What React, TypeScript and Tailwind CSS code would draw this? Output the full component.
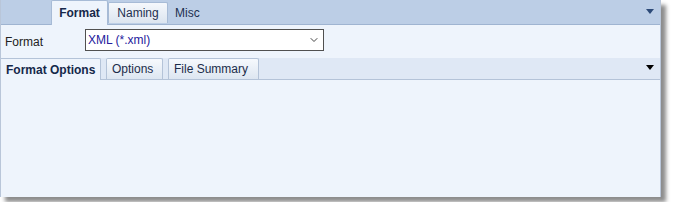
import { ChevronDown } from 'lucide-react';

const font = { fontFamily: '"Liberation Sans", Arial, sans-serif' };

const TopTab = ({ label, active, w }: { label: string; active?: boolean; w: string }) =>
  active ? (
    <div className={`h-[25px] -mb-px ${w} flex items-center justify-center bg-[#eef4fc] border-x border-t border-[#a7bbd6] rounded-t-[2px] text-[12px] font-bold text-[#17284a] whitespace-nowrap`}>
      {label}
    </div>
  ) : (
    <div className={`h-[21px] mb-px ${w} flex items-center justify-center bg-gradient-to-b from-[#f5f8fc] to-[#dce5f0] border-x border-t border-[#a7bbd6] rounded-t-[2px] text-[12px] text-[#1d3050] whitespace-nowrap`}>
      {label}
    </div>
  );

const InnerTab = ({ label, active, w }: { label: string; active?: boolean; w: string }) => (
  <div
    className={
      active
        ? `h-[22px] -mb-px ${w} pl-[5px] flex items-center bg-[#eef4fc] border-r border-t border-[#b4c3d8] rounded-tr-[2px] text-[12px] font-bold text-[#15284a] whitespace-nowrap`
        : `h-[21px] ${w} pl-[5px] flex items-center bg-gradient-to-b from-[#f6f9fd] to-[#dde6f1] border-x border-t border-[#b4c3d8] rounded-t-[2px] text-[12px] text-[#1b2c4a] whitespace-nowrap`
    }
  >
    {label}
  </div>
);

export default function App() {
  return (
    <div className="w-[677px] h-[202px] bg-white" style={font}>
      <div className="w-[661px] h-[197px] flex flex-col bg-[#eef4fc] border-x border-[#b9c6d9] shadow-[5px_5px_4px_rgba(0,0,0,0.45)]">
        <div className="h-[25px] flex items-end bg-[#bccee6] border-b border-[#9fb4d1] pl-[50px] pr-[6px]">
          <TopTab label="Format" active w="w-[57px]" />
          <TopTab label="Naming" w="w-[60px]" />
          <div className="h-[21px] mb-px pl-[7px] flex items-center text-[12px] text-[#1d3050]">Misc</div>
          <div className="ml-auto mb-[10px] w-0 h-0 border-x-[4px] border-x-transparent border-t-[5px] border-t-[#2c4a78]" />
        </div>

        <div className="h-[33px] flex items-start pt-[4px]">
          <div className="w-[84px] pl-[4px] pt-[4px] text-[12px] text-[#222]">Format</div>
          <div className="w-[239px] h-[22px] flex items-center bg-white border border-[#505050] pl-[2px] pr-[3px]">
            <span className="text-[12px] text-[#24209c]">XML (*.xml)</span>
            <ChevronDown className="ml-auto w-[12px] h-[12px] text-[#444]" strokeWidth={2} />
          </div>
        </div>

        <div className="h-[22px] flex items-end gap-[5px] bg-[#dfe8f5] border-b border-[#b4c3d8] pr-[6px]">
          <InnerTab label="Format Options" active w="w-[100px]" />
          <InnerTab label="Options" w="w-[57px]" />
          <InnerTab label="File Summary" w="w-[91px]" />
          <div className="ml-auto mb-[9px] w-0 h-0 border-x-[4px] border-x-transparent border-t-[5px] border-t-black" />
        </div>

        <div className="flex-1" />
      </div>
    </div>
  );
}
